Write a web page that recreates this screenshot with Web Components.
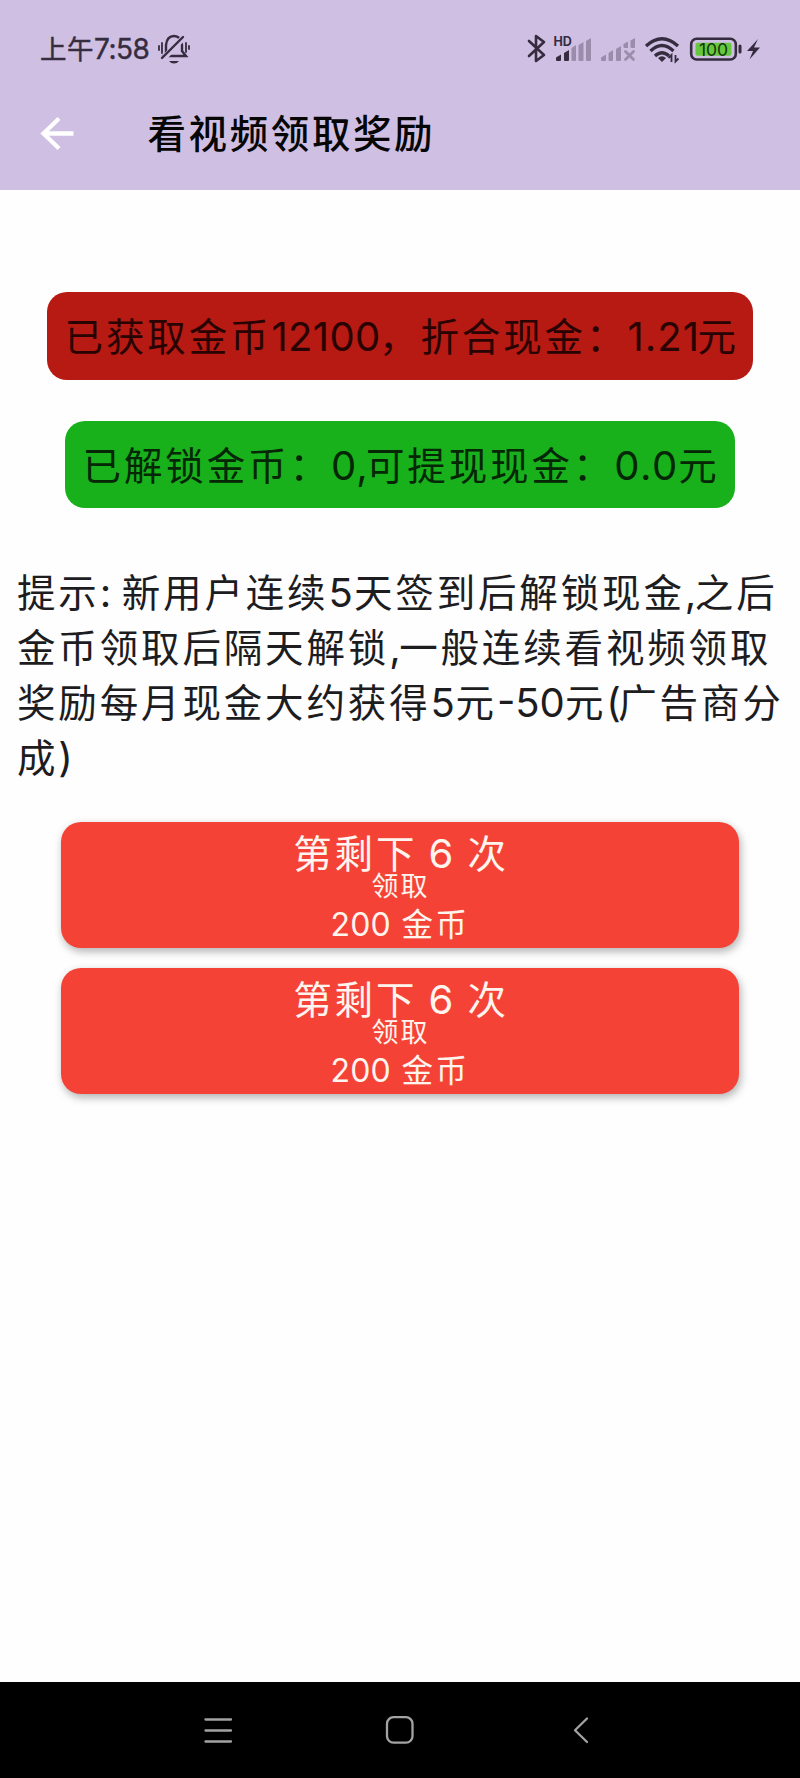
<!DOCTYPE html>
<html lang="zh-CN">
<head>
<meta charset="utf-8">
<title>看视频领取奖励</title>
<style>
  body {
    margin: 0;
    background: #fefefe;
    font-family: "Noto Sans CJK SC", sans-serif;
  }
</style>
</head>
<body>
<reward-page></reward-page>

<script>
const define = (name, html) => {
  const template = document.createElement("template");
  template.innerHTML = html;

  window.customElements.define(name, class extends HTMLElement {
    connectedCallback() {
      if (this.shadowRoot) return;
      this.attachShadow({ mode: "open" });
      this.shadowRoot.appendChild(template.content.cloneNode(true));
    }
  });
};

// digits and punctuation inside a chinese line, boxed to a fixed advance
define("latin-run", `
  <style>
    :host {
      display: inline-block;
      font-family: Inter, sans-serif;
      font-size: 1.04em;
      line-height: 1;
      white-space: nowrap;
      text-align: left;
    }
  </style>
  <slot></slot>
`);

define("status-bar", `
  <style>
    :host {
      display: flex;
      justify-content: space-between;
      height: 98px;
      padding: 0 39px 0 40px;
      box-sizing: border-box;
      color: #352c40;
    }
    .time {
      display: flex;
      align-items: center;
      font-size: 26.5px;
      letter-spacing: 0.5px;
      white-space: nowrap;
      -webkit-text-stroke: 0.4px;
    }
    .time span { padding-bottom: 4px; }
    latin-run {
      width: 63px;
      font-size: 28px;
      letter-spacing: -0.5px;
    }
    svg { display: block; }
    .icons { display: flex; }
  </style>
  <div class="time"><span>上午</span><latin-run>7:58</latin-run>
    <svg width="36" height="32" viewBox="157 33 36 32" fill="none" stroke="#352c40" stroke-width="2.4" stroke-linecap="round">
      <path d="M163 56H184M166 55V45Q167 36 174 36Q181 36 182 45V51L186 56H183"/>
      <path d="M163 59L184 37" stroke="#cebfe3" stroke-width="6"/>
      <path d="M162 58L183 37"/>
      <path d="M159 46V50M162 43V53M186 43V52M189 46V49" stroke-width="1.8"/>
      <path d="M169 61H179Q177 63.500 174 63.500Q171 63.500 169 61Z" fill="#352c40" stroke="none"/>
    </svg>
  </div>
  <div class="icons">
    <svg width="236" height="98" viewBox="525 0 236 98" font-family="Inter, sans-serif">
      <path d="M529 41L544 55L536 61V36L544 42L529 56" fill="none" stroke="#352c40" stroke-width="2.6" stroke-linejoin="round" stroke-linecap="round"/>
      <text x="553.5" y="45.500" font-size="12.500" font-weight="700" fill="#352c40">HD</text>
      <g fill="#352c40">
        <path d="M556 60V57.500L561 54.500V60Q561 61 560 61H557Q556 61 556 60Z"/>
        <path d="M564 60V53L569 50V60Q569 61 568 61H565Q564 61 564 60Z"/>
      </g>
      <g fill="#9c8cac">
        <path d="M571.500 60V48L576 45V60Q576 61 575 61H572.500Q571.500 61 571.500 60Z"/>
        <path d="M578.500 60V45L583.500 42V60Q583.500 61 582.500 61H579.500Q578.500 61 578.500 60Z"/>
        <path d="M586 60V41L591 38V60Q591 61 590 61H587Q586 61 586 60Z"/>
        <path d="M601 60V57.500L606 54.500V60Q606 61 605 61H602Q601 61 601 60Z"/>
        <path d="M608.500 60V53L613 50V60Q613 61 612 61H609.500Q608.500 61 608.500 60Z"/>
        <path d="M616 60V49L621 46V60Q621 61 620 61H617Q616 61 616 60Z"/>
        <path d="M623.500 47V44L628 41.500V48H624.500Q623.500 48 623.500 47Z"/>
        <path d="M630.500 47V40.500L635 38V47Q635 48 634 48H631.500Q630.500 48 630.500 47Z"/>
      </g>
      <path d="M625.500 51.500L633.500 59.500M633.500 51.500L625.500 59.500" stroke="#9c8cac" stroke-width="2.8" stroke-linecap="round"/>
      <g fill="none" stroke="#352c40" stroke-width="3.300">
        <path d="M646 46Q662 31.500 678 46"/>
        <path d="M650.500 51Q662 40 673.500 51"/>
        <path d="M655 56Q662 49.500 669 56"/>
      </g>
      <path d="M658 58Q662 54.500 666 58L662 62Z" fill="#352c40"/>
      <path d="M668.500 58L671.500 55V62M675.500 55V61.500L678.500 58.500" fill="none" stroke="#352c40" stroke-width="1.800"/>
      <rect x="691.2" y="38.700" width="44.600" height="20.800" rx="5.500" fill="none" stroke="#352c40" stroke-width="2.600"/>
      <rect x="695.500" y="42.700" width="36" height="13" rx="2" fill="#66c83c"/>
      <path d="M740 46V52" stroke="#352c40" stroke-width="3" stroke-linecap="round"/>
      <text x="713.500" y="55.500" font-size="17.500" text-anchor="middle" textLength="29" fill="#16350e">100</text>
      <path d="M758 39L747 51H753L749.500 59.500L760 47.500H754Z" fill="#352c40"/>
    </svg>
  </div>
`);

define("app-header", `
  <style>
    :host {
      display: flex;
      align-items: center;
      height: 70px;
      padding: 0 0 0 40px;
      color: #060606;
    }
    svg { display: block; }
    h1 {
      margin: 0 0 5px 72.5px;
      font-size: 38.5px;
      font-weight: 500;
      letter-spacing: 2.6px;
      line-height: 56px;
      white-space: nowrap;
    }
  </style>
  <svg width="35" height="34" viewBox="40 116 35 34" fill="none" stroke="#fff" stroke-width="4.300">
    <path d="M59 118.500L43.500 133.500L59 148.500M43.500 133.500H73.500"/>
  </svg>
  <h1><slot></slot></h1>
`);

define("coin-badge", `
  <style>
    :host {
      display: block;
      height: 87.500px;
      padding-left: 17.5px;
      box-sizing: border-box;
      border-radius: 20px;
      font-size: 38.500px;
      letter-spacing: 2.900px;
      line-height: 84px;
      white-space: nowrap;
    }
    :host([kind="earned"]) { width: 706px; background: #b61a12; color: #290302; }
    :host([kind="unlocked"]) { width: 670px; background: #18b11c; color: #052706; }
  </style>
  <slot></slot>
`);

define("tip-text", `
  <style>
    :host {
      display: block;
      padding-left: 17px;
      font-size: 38.500px;
      letter-spacing: 2.850px;
      line-height: 55px;
      white-space: nowrap;
      color: #1d1c1e;
    }
  </style>
  <slot></slot>
`);

define("reward-button", `
  <style>
    :host {
      display: flex;
      flex-direction: column;
      align-items: center;
      width: 678px;
      height: 126px;
      padding-top: 8px;
      box-sizing: border-box;
      border-radius: 20px;
      background: #f44336;
      color: #fff4ee;
      white-space: nowrap;
      box-shadow: 2px 4px 8px rgba(0, 0, 0, .26), 0 1px 10px rgba(0, 0, 0, .06);
    }
    .left {
      padding-left: 2px;
      font-size: 38.500px;
      letter-spacing: 2.900px;
      line-height: 42px;
    }
    .action {
      padding-left: 1px;
      font-size: 27px;
      letter-spacing: 2px;
      line-height: 21px;
    }
    .coins {
      font-size: 31.500px;
      letter-spacing: 2.500px;
      line-height: 54px;
    }
    .left latin-run {
      width: 50px;
      text-align: center;
    }
    .coins latin-run {
      width: 71px;
      font-size: 32px;
      letter-spacing: 0.2px;
    }
  </style>
  <div class="left">第剩下<latin-run> 6 </latin-run>次</div>
  <div class="action">领取</div>
  <div class="coins"><latin-run>200 </latin-run>金币</div>
`);

define("nav-bar", `
  <style>
    :host {
      display: flex;
      justify-content: center;
      align-items: center;
      height: 96.500px;
      background: #000;
    }
    svg { display: block; }
  </style>
  <svg width="400" height="30" viewBox="200 1715 400 30" fill="none" stroke="#a3a3a3" stroke-width="2.300" stroke-linecap="round" stroke-linejoin="round">
    <path d="M205.500 1719.500H231M205.500 1730.500H231M205.500 1741.500H231"/>
    <rect x="387" y="1717.200" width="25.500" height="25.500" rx="6.500"/>
    <path d="M587 1718.500L575 1730.200L587 1742"/>
  </svg>
`);

define("reward-page", `
  <style>
    :host {
      display: flex;
      flex-direction: column;
      height: 1778px;
      overflow: hidden;
    }
    header { height: 190px; background: #cebfe3; }
    .badges {
      display: flex;
      flex-direction: column;
      align-items: center;
      gap: 41px;
      padding-top: 102.300px;
    }
    tip-text { margin-top: 55px; }
    .rewards {
      display: flex;
      flex-direction: column;
      align-items: center;
      gap: 20.500px;
      padding-top: 38.5px;
    }
    nav-bar { margin-top: auto; }
  </style>
  <header>
    <status-bar></status-bar>
    <app-header>看视频领取奖励</app-header>
  </header>
  <div class="badges">
    <coin-badge kind="earned">已获取金币<latin-run style="width: 107.500px; letter-spacing: 0.3px">12100</latin-run>，折合现金：<latin-run style="width: 70px; letter-spacing: 1px">1.21</latin-run>元</coin-badge>
    <coin-badge kind="unlocked">已解锁金币：<latin-run style="width: 35px; letter-spacing: 1px">0,</latin-run>可提现现金：<latin-run style="width: 64px; letter-spacing: 1.500px">0.0</latin-run>元</coin-badge>
  </div>
  <tip-text>提示<latin-run style="width: 22px">: </latin-run>新用户连续<latin-run style="width: 25.500px; letter-spacing: 0">5</latin-run>天签到后解锁现金<latin-run style="width: 10px; letter-spacing: 0">,</latin-run>之后<br>金币领取后隔天解锁<latin-run style="width: 10px; letter-spacing: 0">,</latin-run>一般连续看视频领取<br>奖励每月现金大约获得<latin-run style="width: 25px; letter-spacing: 0">5</latin-run>元<latin-run style="width: 68px; letter-spacing: 0">-50</latin-run>元<latin-run style="width: 12px; letter-spacing: 0">(</latin-run>广告商分<br>成<latin-run style="width: 12px; letter-spacing: 0">)</latin-run></tip-text>
  <div class="rewards">
    <reward-button></reward-button>
    <reward-button></reward-button>
  </div>
  <nav-bar></nav-bar>
`);
</script>
</body>
</html>
